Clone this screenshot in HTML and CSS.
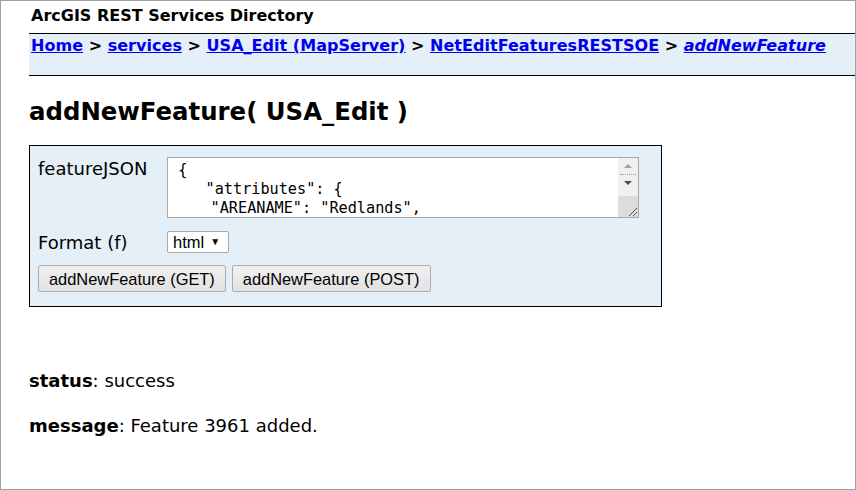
FILE: index.html
```html
<!DOCTYPE html>
<html>
<head>
<meta charset="utf-8">
<title>ArcGIS REST Services Directory</title>
<link rel="stylesheet" href="styles.css">
</head>
<body>
<div class="window">
  <div class="app-title">ArcGIS REST Services Directory</div>
  <div class="crumbs">
    <a href="#">Home</a> &gt; <a href="#">services</a> &gt; <a href="#">USA_Edit (MapServer)</a> &gt; <a href="#">NetEditFeaturesRESTSOE</a> &gt; <a href="#" class="current">addNewFeature</a>
  </div>
  <h1 class="op-title">addNewFeature( USA_Edit )</h1>
  <form class="form-box">
    <div class="row row-json">
      <label class="field-label">featureJSON</label>
      <div class="fake-textarea">
        <div class="ta-text">
          <div class="ta-line"> {</div>
          <div class="ta-line">    "attributes": {</div>
          <div class="ta-line ta-nudge">    "AREANAME": "Redlands",</div>
        </div>
        <div class="ta-scroll">
          <div class="sb-track">
            <span class="sb-up"></span>
            <span class="sb-sep"></span>
            <span class="sb-down"></span>
          </div>
          <div class="sb-grip">
            <svg width="12" height="12" viewBox="0 0 12 12"><path d="M11 3 L3 11 M11 7 L7 11" stroke="#555" stroke-width="1" fill="none"/></svg>
          </div>
        </div>
      </div>
    </div>
    <div class="row row-format">
      <label class="field-label">Format (f)</label>
      <div class="fake-select"><span>html</span><span class="caret">&#9660;</span></div>
    </div>
    <div class="buttons">
      <button type="button" class="btn">addNewFeature (GET)</button>
      <button type="button" class="btn">addNewFeature (POST)</button>
    </div>
  </form>
  <div class="result">
    <p class="result-line"><b>status</b>: success</p>
    <p class="result-line"><b>message</b>: Feature 3961 added.</p>
  </div>
</div>
</body>
</html>
```

FILE: styles.css
```css
html, body {
  margin: 0;
  padding: 0;
  background: #ffffff;
}

body {
  font-family: "DejaVu Sans", Verdana, sans-serif;
  color: #000;
}

.window {
  box-sizing: border-box;
  width: 856px;
  height: 490px;
  border: 1px solid #a0a0a0;
  padding-left: 28px;
  overflow: hidden;
}

.app-title {
  font-weight: bold;
  font-size: 16px;
  line-height: 20px;
  padding: 5px 0 0 2px;
  height: 27px;
}

.crumbs {
  box-sizing: border-box;
  height: 43px;
  border-top: 1px solid #000;
  border-bottom: 1px solid #000;
  background: #e5eff7;
  padding: 2px 0 0 2px;
  font-size: 16px;
  font-weight: bold;
  line-height: 20px;
  letter-spacing: 0.03px;
  white-space: nowrap;
}

.crumbs a {
  color: #0000ee;
  text-decoration: underline;
}

.crumbs a.current {
  font-style: italic;
}

.op-title {
  font-size: 24.4px;
  font-weight: bold;
  line-height: 28px;
  margin: 22px 0 0 0;
  height: 28px;
}

.form-box {
  box-sizing: border-box;
  width: 633px;
  margin-top: 19px;
  border: 1px solid #000;
  background: #e5eff7;
  padding: 11px 8px 14px 8px;
  display: flex;
  flex-direction: column;
  gap: 12px;
}

.row {
  display: flex;
}

.field-label {
  width: 129px;
  font-size: 18px;
}

.row-json .field-label {
  padding-top: 1px;
  line-height: 22px;
}

.row-format {
  align-items: center;
  margin-top: 1px;
}

.fake-textarea {
  box-sizing: border-box;
  width: 472px;
  height: 61px;
  border: 1px solid #a9a9a9;
  background: #fff;
  display: flex;
  overflow: hidden;
}

.ta-text {
  flex: 1;
  padding: 3px 0 0 1px;
  font-family: "DejaVu Sans Mono", Consolas, monospace;
  font-size: 15.2px;
  line-height: 19px;
  overflow: hidden;
}

.ta-line {
  white-space: pre;
}

.ta-nudge {
  padding-left: 5px;
}

.ta-scroll {
  width: 20px;
  display: flex;
  flex-direction: column;
  background: #f0f0f0;
}

.sb-track {
  height: 38px;
  display: flex;
  flex-direction: column;
  align-items: center;
}

.sb-up {
  margin-top: 6px;
  width: 0;
  height: 0;
  border-left: 4px solid transparent;
  border-right: 4px solid transparent;
  border-bottom: 4px solid #a3a3a3;
}

.sb-sep {
  margin-top: 6px;
  width: 16px;
  border-top: 1px dotted #9a9a9a;
}

.sb-down {
  margin-top: 6px;
  width: 0;
  height: 0;
  border-left: 4px solid transparent;
  border-right: 4px solid transparent;
  border-top: 4px solid #505050;
}

.sb-grip {
  flex: 1;
  background: #dcdcdc;
  display: flex;
  align-items: flex-end;
  justify-content: flex-end;
}

.sb-grip svg {
  display: block;
}

.fake-select {
  box-sizing: border-box;
  width: 62px;
  height: 22px;
  border: 1px solid #a9a9a9;
  border-radius: 2px;
  background: #fff;
  font-family: "Liberation Sans", Arial, sans-serif;
  font-size: 16.5px;
  line-height: 20px;
  padding-left: 5px;
  display: flex;
  align-items: center;
  gap: 6px;
  white-space: nowrap;
}

.caret {
  font-size: 10px;
  line-height: 10px;
}

.buttons {
  display: flex;
  gap: 6px;
}

.btn {
  box-sizing: border-box;
  height: 27px;
  padding: 0 10px;
  border: 1px solid #acacac;
  border-radius: 2px;
  background: linear-gradient(#f0f0f0, #e2e2e2);
  font-family: "Liberation Sans", Arial, sans-serif;
  font-size: 16.4px;
  color: #000;
  line-height: 24px;
}

.result {
  margin-top: 63px;
}

.result-line {
  margin: 0 0 23px 0;
  font-size: 18px;
  line-height: 22px;
}
```
